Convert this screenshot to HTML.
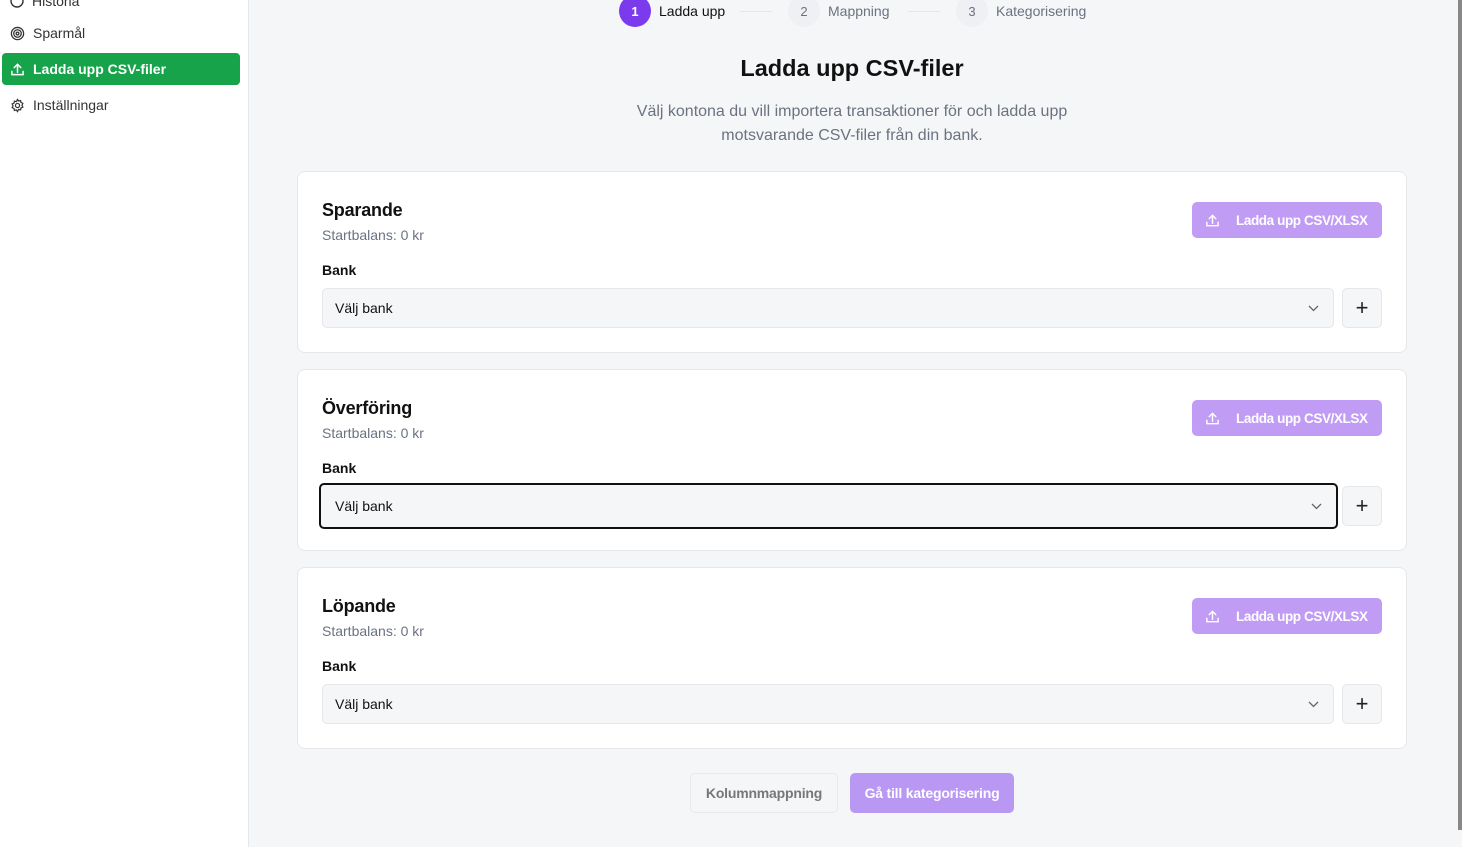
<!DOCTYPE html>
<html><head><meta charset="utf-8"><style>
*{box-sizing:border-box;margin:0;padding:0}
body{width:1462px;height:847px;overflow:hidden;background:#f5f6f8;font-family:"Liberation Sans",sans-serif;position:relative;color:#111}
.side{position:absolute;left:0;top:0;width:249px;height:847px;background:#fff;border-right:1px solid #e5e7eb}
.nav{position:absolute;left:2px;width:238px;height:32px;display:flex;align-items:center;padding-left:8px;font-size:14px;color:#333;border-radius:4px}
.nav svg{margin-right:8px}
.nav.act{background:#16a34a;color:#fff;font-weight:bold}
.circ{position:absolute;top:-5px;width:32px;height:32px;border-radius:50%;display:flex;align-items:center;justify-content:center;font-size:13px}
.stl{position:absolute;top:3px;font-size:14px}
h1{position:absolute;left:0;width:1704px;top:55px;text-align:center;font-size:23.5px;font-weight:bold}
.sub{position:absolute;left:600px;width:504px;top:100px;text-align:center;font-size:16px;line-height:24px;color:#6b7280}
.card{position:absolute;left:297px;width:1110px;height:182px;background:#fff;border:1px solid #e5e7eb;border-radius:8px}
.t{position:absolute;left:24px;top:28px;font-size:18px;font-weight:bold;letter-spacing:-0.2px}
.sb{position:absolute;left:24px;top:55px;font-size:14px;color:#6b7280}
.bl{position:absolute;left:24px;top:90px;font-size:14px;font-weight:bold}
.up{position:absolute;left:894px;top:30px;width:190px;height:36px;background:#c09cf5;border-radius:5px;color:#fff;font-weight:bold;font-size:13.5px;letter-spacing:-0.4px;display:flex;align-items:center;padding-left:13px;white-space:nowrap}
.up span{margin-left:16px}
.sel{position:absolute;left:24px;top:116px;width:1012px;height:40px;background:#f5f6f8;border:1px solid #e5e7eb;border-radius:5px;font-size:14px;display:flex;align-items:center;padding-left:12px}
.sel.f{border:2px solid #111;left:21px;top:113px;width:1019px;height:46px;padding-left:14px}
.chev{position:absolute;right:14px;top:50%;margin-top:-5px}
.plus{position:absolute;left:1044px;top:116px;width:40px;height:40px;background:#f5f6f8;border:1px solid #e5e7eb;border-radius:5px;display:flex;align-items:center;justify-content:center;font-size:22px;color:#222}
.btn{position:absolute;top:773px;height:40px;border-radius:5px;font-size:14px;font-weight:bold;display:flex;align-items:center;justify-content:center;letter-spacing:-0.2px}
</style></head><body>
<div class="side">
<div class="nav" style="top:-15px"><svg width="14" height="14" viewBox="0 0 14 14"><circle cx="7" cy="7" r="6" fill="none" stroke="#333" stroke-width="1.4"/></svg>Historia</div>
<div class="nav" style="top:17px"><svg width="15" height="15" viewBox="0 0 16 16" fill="none" stroke="#333" stroke-width="1.4"><circle cx="8" cy="8" r="6.5"/><circle cx="8" cy="8" r="4"/><circle cx="8" cy="8" r="1.5"/></svg>Sparmål</div>
<div class="nav act" style="top:53px"><svg width="15" height="15" viewBox="0 0 16 16" fill="none" stroke="#fff" stroke-width="1.6" stroke-linecap="round"><path d="M2 10v3.5h12V10M8 11V2.5M4.5 6L8 2.5 11.5 6"/></svg>Ladda upp CSV-filer</div>
<div class="nav" style="top:89px"><svg width="15" height="15" viewBox="0 0 16 16" fill="none" stroke="#333" stroke-width="1.3"><circle cx="8" cy="8" r="2.2"/><path d="M8 1.5l1.2 1.8 2.1-.6.4 2.1 2 .9-.9 2 .9 2-2 .9-.4 2.1-2.1-.6L8 14.5l-1.2-1.8-2.1.6-.4-2.1-2-.9.9-2-.9-2 2-.9.4-2.1 2.1.6z"/></svg>Inställningar</div>
</div>
<div class="circ" style="left:619px;background:#7c3aed;color:#fff;font-weight:bold">1</div><div class="stl" style="left:659px">Ladda upp</div>
<div style="position:absolute;left:740px;top:11px;width:32px;height:1px;background:#e5e7eb"></div>
<div class="circ" style="left:788px;background:#eef0f3;color:#6b7280">2</div><div class="stl" style="left:828px;color:#6b7280">Mappning</div>
<div style="position:absolute;left:908px;top:11px;width:32px;height:1px;background:#e5e7eb"></div>
<div class="circ" style="left:956px;background:#eef0f3;color:#6b7280">3</div><div class="stl" style="left:996px;color:#6b7280">Kategorisering</div>
<h1>Ladda upp CSV-filer</h1>
<div class="sub">Välj kontona du vill importera transaktioner för och ladda upp motsvarande CSV-filer från din bank.</div>

<div class="card" style="top:171px"><div class="t">Sparande</div><div class="sb">Startbalans: 0 kr</div><div class="bl">Bank</div>
<div class="up"><svg width="15" height="15" viewBox="0 0 16 16" fill="none" stroke="#fff" stroke-width="1.5" stroke-linecap="round"><path d="M2 10v3.5h12V10M8 11V2.5M4.5 6L8 2.5 11.5 6"/></svg><span>Ladda upp CSV/XLSX</span></div>
<div class="sel">Välj bank<svg class="chev" width="11" height="10" viewBox="0 0 11 10"><path d="M1 3l4.5 4.5L10 3" fill="none" stroke="#666" stroke-width="1.3"/></svg></div><div class="plus">+</div></div>

<div class="card" style="top:369px"><div class="t">Överföring</div><div class="sb">Startbalans: 0 kr</div><div class="bl">Bank</div>
<div class="up"><svg width="15" height="15" viewBox="0 0 16 16" fill="none" stroke="#fff" stroke-width="1.5" stroke-linecap="round"><path d="M2 10v3.5h12V10M8 11V2.5M4.5 6L8 2.5 11.5 6"/></svg><span>Ladda upp CSV/XLSX</span></div>
<div class="sel f">Välj bank<svg class="chev" width="11" height="10" viewBox="0 0 11 10"><path d="M1 3l4.5 4.5L10 3" fill="none" stroke="#666" stroke-width="1.3"/></svg></div><div class="plus">+</div></div>

<div class="card" style="top:567px"><div class="t">Löpande</div><div class="sb">Startbalans: 0 kr</div><div class="bl">Bank</div>
<div class="up"><svg width="15" height="15" viewBox="0 0 16 16" fill="none" stroke="#fff" stroke-width="1.5" stroke-linecap="round"><path d="M2 10v3.5h12V10M8 11V2.5M4.5 6L8 2.5 11.5 6"/></svg><span>Ladda upp CSV/XLSX</span></div>
<div class="sel">Välj bank<svg class="chev" width="11" height="10" viewBox="0 0 11 10"><path d="M1 3l4.5 4.5L10 3" fill="none" stroke="#666" stroke-width="1.3"/></svg></div><div class="plus">+</div></div>

<div class="btn" style="left:690px;width:148px;border:1px solid #e8eaee;background:#f5f6f8;color:#777">Kolumnmappning</div>
<div class="btn" style="left:850px;width:164px;background:#b998f3;color:#fff">Gå till kategorisering</div>
<div style="position:absolute;left:1458px;top:0;width:4px;height:830px;background:#888"></div>
</body></html>
